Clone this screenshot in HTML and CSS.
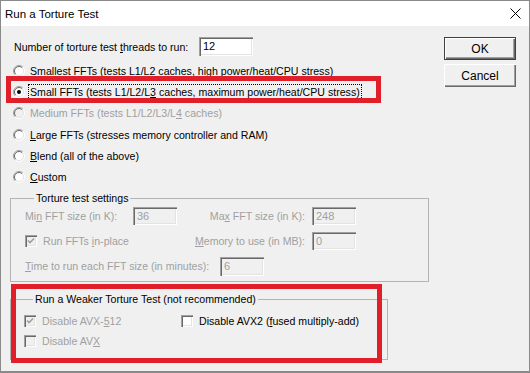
FILE: index.html
```html
<!DOCTYPE html>
<html lang="en">
<head>
  <meta charset="UTF-8" />
  <title>Run a Torture Test</title>
  <link rel="stylesheet" href="styles.css">
</head>
<body>

  <div class="window">
    <div class="titlebar">
      <span class="title">Run a Torture Test</span>
      <svg class="close" width="11" height="11" viewBox="0 0 11 11">
        <path d="M0.5 0.5 L10.5 10.5 M10.5 0.5 L0.5 10.5" stroke="#000" stroke-width="1" fill="none"/>
      </svg>
    </div>

    <div class="dialog">
      <div class="main">
        <div class="threads">
          <label>Number of torture test <u>t</u>hreads to run:</label>
          <span class="field">12</span>
        </div>

        <div class="options">
          <div class="option">
            <svg class="radio" width="12" height="12" viewBox="0 0 12 12">
              <circle cx="6" cy="6" r="5" fill="#fff"/>
              <path d="M2.1 9.9 A5.5 5.5 0 0 1 9.9 2.1" stroke="#a0a0a0" fill="none"/>
              <path d="M2.8 9.2 A4.5 4.5 0 0 1 9.2 2.8" stroke="#696969" fill="none"/>
              <path d="M9.9 2.1 A5.5 5.5 0 0 1 2.1 9.9" stroke="#fff" fill="none"/>
              <path d="M9.2 2.8 A4.5 4.5 0 0 1 2.8 9.2" stroke="#e3e3e3" fill="none"/>
            </svg>
            <span>Smallest FFTs (tests L1/L2 caches, high power/heat/CPU stress)</span>
          </div>
          <div class="option">
            <svg class="radio" width="12" height="12" viewBox="0 0 12 12">
              <circle cx="6" cy="6" r="5" fill="#fff"/>
              <path d="M2.1 9.9 A5.5 5.5 0 0 1 9.9 2.1" stroke="#a0a0a0" fill="none"/>
              <path d="M2.8 9.2 A4.5 4.5 0 0 1 9.2 2.8" stroke="#696969" fill="none"/>
              <path d="M9.9 2.1 A5.5 5.5 0 0 1 2.1 9.9" stroke="#fff" fill="none"/>
              <path d="M9.2 2.8 A4.5 4.5 0 0 1 2.8 9.2" stroke="#e3e3e3" fill="none"/>
              <circle cx="6" cy="6" r="2" fill="#000"/>
            </svg>
            <span class="focus">Small FFTs (tests L1/L2/L<u>3</u> caches, maximum power/heat/CPU stress)</span>
          </div>
          <div class="option disabled">
            <svg class="radio" width="12" height="12" viewBox="0 0 12 12">
              <circle cx="6" cy="6" r="5" fill="#f0f0f0"/>
              <path d="M2.1 9.9 A5.5 5.5 0 0 1 9.9 2.1" stroke="#a0a0a0" fill="none"/>
              <path d="M2.8 9.2 A4.5 4.5 0 0 1 9.2 2.8" stroke="#696969" fill="none"/>
              <path d="M9.9 2.1 A5.5 5.5 0 0 1 2.1 9.9" stroke="#fff" fill="none"/>
              <path d="M9.2 2.8 A4.5 4.5 0 0 1 2.8 9.2" stroke="#e3e3e3" fill="none"/>
            </svg>
            <span>Medium FFTs (tests L1/L2/L3/L<u>4</u> caches)</span>
          </div>
          <div class="option">
            <svg class="radio" width="12" height="12" viewBox="0 0 12 12">
              <circle cx="6" cy="6" r="5" fill="#fff"/>
              <path d="M2.1 9.9 A5.5 5.5 0 0 1 9.9 2.1" stroke="#a0a0a0" fill="none"/>
              <path d="M2.8 9.2 A4.5 4.5 0 0 1 9.2 2.8" stroke="#696969" fill="none"/>
              <path d="M9.9 2.1 A5.5 5.5 0 0 1 2.1 9.9" stroke="#fff" fill="none"/>
              <path d="M9.2 2.8 A4.5 4.5 0 0 1 2.8 9.2" stroke="#e3e3e3" fill="none"/>
            </svg>
            <span><u>L</u>arge FFTs (stresses memory controller and RAM)</span>
          </div>
          <div class="option">
            <svg class="radio" width="12" height="12" viewBox="0 0 12 12">
              <circle cx="6" cy="6" r="5" fill="#fff"/>
              <path d="M2.1 9.9 A5.5 5.5 0 0 1 9.9 2.1" stroke="#a0a0a0" fill="none"/>
              <path d="M2.8 9.2 A4.5 4.5 0 0 1 9.2 2.8" stroke="#696969" fill="none"/>
              <path d="M9.9 2.1 A5.5 5.5 0 0 1 2.1 9.9" stroke="#fff" fill="none"/>
              <path d="M9.2 2.8 A4.5 4.5 0 0 1 2.8 9.2" stroke="#e3e3e3" fill="none"/>
            </svg>
            <span><u>B</u>lend (all of the above)</span>
          </div>
          <div class="option">
            <svg class="radio" width="12" height="12" viewBox="0 0 12 12">
              <circle cx="6" cy="6" r="5" fill="#fff"/>
              <path d="M2.1 9.9 A5.5 5.5 0 0 1 9.9 2.1" stroke="#a0a0a0" fill="none"/>
              <path d="M2.8 9.2 A4.5 4.5 0 0 1 9.2 2.8" stroke="#696969" fill="none"/>
              <path d="M9.9 2.1 A5.5 5.5 0 0 1 2.1 9.9" stroke="#fff" fill="none"/>
              <path d="M9.2 2.8 A4.5 4.5 0 0 1 2.8 9.2" stroke="#e3e3e3" fill="none"/>
            </svg>
            <span><u>C</u>ustom</span>
          </div>
        </div>

        <fieldset class="group settings">
          <legend>Torture test settings</legend>
          <div class="setting-grid">
            <span class="dim">Mi<u>n</u> FFT size (in K):</span>
            <span class="field off">36</span>
            <span class="dim right">Ma<u>x</u> FFT size (in K):</span>
            <span class="field off">248</span>

            <span class="check-label dim">
              <span class="check off">
                <svg width="12" height="12" viewBox="0 0 12 12"><polyline points="3,5.5 5,7.5 9,3.5" stroke="#a0a0a0" stroke-width="1.6" fill="none"/></svg>
              </span>
              <span>Run FFTs <u>i</u>n-place</span>
            </span>
            <span class="dim right"><u>M</u>emory to use (in MB):</span>
            <span class="field off">0</span>
          </div>
          <div class="time-row">
            <label class="dim"><u>T</u>ime to run each FFT size (in minutes):</label>
            <span class="field off">6</span>
          </div>
        </fieldset>

        <fieldset class="group weaker">
          <legend>Run a Weaker Torture Test (not recommended)</legend>
          <div class="weak-grid">
            <span class="check-label dim">
              <span class="check off">
                <svg width="12" height="12" viewBox="0 0 12 12"><polyline points="3,5.5 5,7.5 9,3.5" stroke="#a0a0a0" stroke-width="1.6" fill="none"/></svg>
              </span>
              <span>Disable AVX-<u>5</u>12</span>
            </span>
            <span class="check-label">
              <span class="check"></span>
              <span>Disable AVX2 (<u>f</u>used multiply-add)</span>
            </span>
            <span class="check-label dim">
              <span class="check off"></span>
              <span>Disable AV<u>X</u></span>
            </span>
          </div>
        </fieldset>
      </div>

      <div class="buttons">
        <button class="btn default">OK</button>
        <button class="btn">Cancel</button>
      </div>
    </div>

    <div class="mark mark-small"></div>
    <div class="mark mark-weak"></div>
  </div>

</body>
</html>
```

FILE: styles.css
```css
* {
  margin: 0;
  padding: 0;
  box-sizing: border-box;
}

html, body {
  width: 530px;
  height: 373px;
  overflow: hidden;
}

body {
  font-family: "Liberation Sans", Arial, sans-serif;
  font-size: 10.6px;
  color: #000;
  background: #f0f0f0;
}

.window {
  position: relative;
  width: 530px;
  height: 373px;
  border: 1px solid #8a8a8a;
  border-bottom-width: 2px;
  background: #f0f0f0;
}

.titlebar {
  height: 25px;
  background: #fff;
  display: flex;
  align-items: center;
  justify-content: space-between;
  padding: 0 8px 0 4px;
}

.title {
  font-size: 11.5px;
}

.dialog {
  display: flex;
  padding: 11px 13px 0 9px;
}

.main {
  flex: 1;
}

/* text boxes */
.field {
  display: block;
  width: 54px;
  height: 19px;
  padding: 2px 4px;
  line-height: 15px;
  font-size: 11px;
  background: #fff;
  box-shadow: inset 1px 1px #a0a0a0, inset 2px 2px #696969, inset -1px -1px #fff, inset -2px -2px #e3e3e3;
}

.field.off {
  width: 44px;
  height: 18px;
  line-height: 14px;
  background: #f0f0f0;
  color: #a0a0a0;
}

.threads {
  display: flex;
  align-items: center;
  height: 19px;
  padding-left: 4px;
}

.threads label {
  width: 185px;
}

/* radio buttons */
.options {
  margin-top: 4px;
  padding-left: 3px;
}

.option {
  display: flex;
  align-items: center;
  gap: 5px;
  height: 21.3px;
  white-space: nowrap;
}

.radio {
  flex: none;
}

.disabled, .dim {
  color: #a0a0a0;
}

.focus {
  outline: 1px dotted #000;
  outline-offset: 1px;
}

/* group boxes */
.group {
  border: 1px solid #b4b4b4;
  min-width: 0;
}

.group legend {
  margin-left: 9px;
  padding: 0 2px;
  line-height: 13px;
}

.settings {
  width: 419px;
  margin-top: 4px;
  padding: 2px 0 5px 14px;
}

.setting-grid {
  display: grid;
  grid-template-columns: 108px 44px 135px 44px;
  grid-auto-rows: 18px;
  row-gap: 7px;
  align-items: center;
  white-space: nowrap;
}

.right {
  text-align: right;
  padding-right: 7px;
}

.setting-grid .check-label {
  grid-column: 1 / 3;
}

.time-row {
  display: flex;
  align-items: center;
  margin-top: 7px;
  height: 19px;
}

.time-row label {
  width: 195px;
}

.time-row .field {
  height: 19px;
}

.weaker {
  width: 378px;
  margin-top: 11px;
  padding: 7px 0 10px 13px;
}

.weak-grid {
  display: grid;
  grid-template-columns: 157px auto;
  grid-auto-rows: 16px;
  row-gap: 4px;
  align-items: center;
  white-space: nowrap;
}

/* checkboxes */
.check-label {
  display: flex;
  align-items: center;
  gap: 6px;
}

.check {
  flex: none;
  display: block;
  width: 12px;
  height: 12px;
  background: #fff;
  box-shadow: inset 1px 1px #a0a0a0, inset 2px 2px #696969, inset -1px -1px #fff, inset -2px -2px #e3e3e3;
}

.check.off {
  background: #f0f0f0;
}

.check svg {
  display: block;
}

/* buttons */
.buttons {
  width: 72px;
  display: flex;
  flex-direction: column;
  gap: 4px;
}

.btn {
  height: 23px;
  font-family: "Liberation Sans", Arial, sans-serif;
  font-size: 12px;
  color: #000;
  background: #f0f0f0;
  border: none;
  box-shadow: inset 1px 1px #fff, inset -1px -1px #696969, inset -2px -2px #a0a0a0;
}

.btn.default {
  box-shadow: inset 0 0 0 1px #404040, inset 2px 2px #fff, inset -2px -2px #696969, inset -3px -3px #a0a0a0;
}

/* red annotation frames */
.mark {
  position: absolute;
  border: 5px solid #e11f2b;
}

.mark-small {
  left: 5px;
  top: 75px;
  width: 375px;
  height: 27px;
}

.mark-weak {
  left: 10px;
  top: 283px;
  width: 371px;
  height: 79px;
}
```
